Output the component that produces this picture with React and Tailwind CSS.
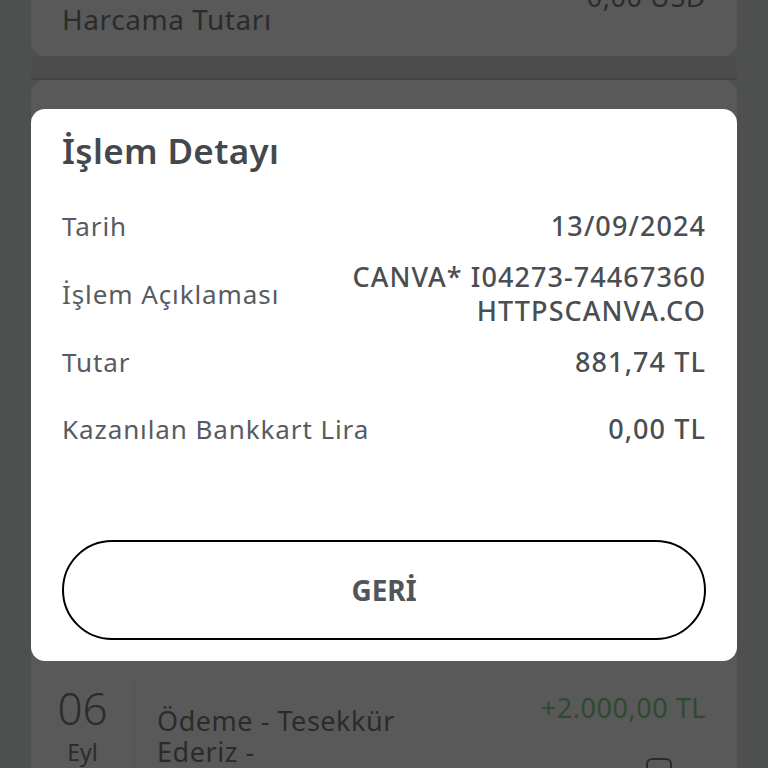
import React from 'react';

const rows = [
  { label: 'Tarih', value: ['13/09/2024'] },
  { label: 'İşlem Açıklaması', value: ['CANVA* I04273-74467360', 'HTTPSCANVA.CO'] },
  { label: 'Tutar', value: ['881,74 TL'] },
  { label: 'Kazanılan Bankkart Lira', value: ['0,00 TL'] },
];

export default function App() {
  return (
    <div className="relative w-[768px] h-[768px] overflow-hidden bg-[#4e4f4f] font-['Noto_Sans',sans-serif]">
      {/* dimmed page behind the dialog */}
      <div className="flex flex-col px-[31px]">
        <div className="h-[80px] -mt-[24px] px-[31px] flex flex-col bg-[#595959] rounded-b-[14px] text-[#2b2b2b]">
          <div className="h-[6px] shrink-0" />
          <span className="self-end text-[27px] leading-[30px] tracking-[0.02em]">0,00 USD</span>
          <span className="text-[28px] leading-[30px] tracking-[0.02em] -mt-[8px]">Harcama Tutarı</span>
        </div>
        <div className="h-[24px] bg-[#4c4c4c] border-b-2 border-[#444444]" />
        <div className="h-[700px] bg-[#595959] rounded-t-[14px]">
          <div className="h-[600px]" />
          <div className="flex h-[100px]">
            <div className="w-[104px] flex flex-col items-center border-r border-[#535353] pt-[4px] text-[#2b2b2b]">
              <span className="text-[44px] leading-[48px] font-light">06</span>
              <span className="mt-[5px] text-[23px] leading-[30px]">Eyl</span>
            </div>
            <div className="flex-1 flex pl-[22px] pr-[31px] pt-[12px]">
              <div className="flex-1 pt-[13px] text-[27px] leading-[31px] tracking-[0.02em] text-[#2b2b2b]">
                <div>Ödeme - Tesekkür</div>
                <div>Ederiz -</div>
              </div>
              <div className="flex flex-col items-end">
                <span className="text-[27px] leading-[31px] tracking-[0.02em] text-[#2f4a30]">+2.000,00 TL</span>
                <span className="mt-[35px] mr-[34px] w-[26px] h-[22px] rounded-[6px] border-2 border-[#2b2b2b]" />
              </div>
            </div>
          </div>
        </div>
      </div>

      {/* dialog */}
      <div className="absolute left-[31px] top-[109px] w-[706px] h-[552px] bg-white rounded-[14px] px-[31px] pt-[21px] flex flex-col">
        <h1 className="text-[35px] leading-[41px] font-semibold tracking-[0.01em] text-[#44484c]">İşlem Detayı</h1>
        <div className="mt-[38px] flex flex-col">
          {rows.map((r, i) => (
            <div
              key={r.label}
              className={
                'flex items-center justify-between leading-[34px] ' +
                (i === 0 ? '' : i === 3 ? 'mt-[33px]' : 'mt-[17px]')
              }
            >
              <span className="text-[26px] tracking-[0.035em] text-[#575b5f]">{r.label}</span>
              <div className="flex flex-col items-end text-[27px] tracking-[0.04em] font-medium text-[#4a4e52]">
                {r.value.map((v) => (
                  <span key={v}>{v}</span>
                ))}
              </div>
            </div>
          ))}
        </div>
        <button className="mt-[94px] h-[100px] w-full rounded-full border-2 border-black bg-white text-[28px] font-bold text-[#50555a]">
          GERİ
        </button>
      </div>
    </div>
  );
}
